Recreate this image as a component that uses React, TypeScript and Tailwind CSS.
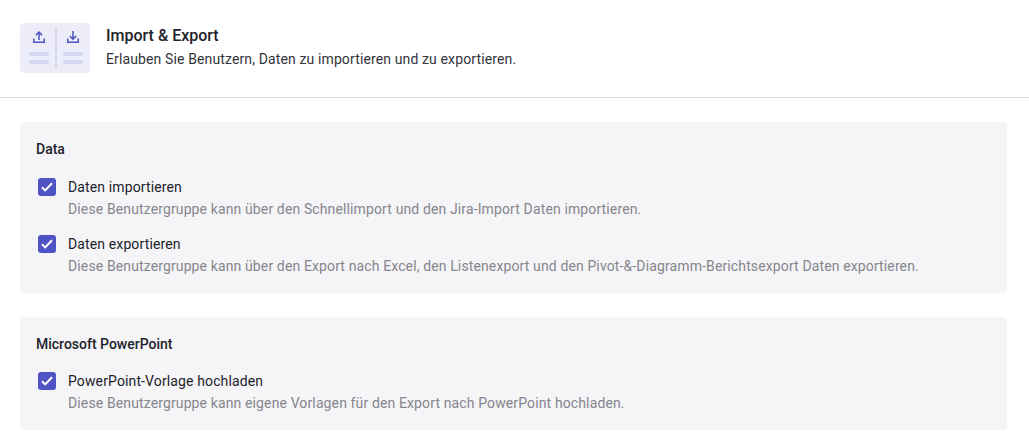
const font = "font-['Roboto',sans-serif]";

const CheckRow = ({ label, hint }: { label: string; hint: string }) => (
  <div className="flex items-start">
    <div className="mt-[9px] mr-[12px] ml-[2px] flex h-[18px] w-[18px] items-center justify-center rounded-[3px] bg-[#5053c4]">
      <svg width="12" height="10" viewBox="0 0 12 10" fill="none">
        <path d="M1 5.2 4.2 8.4 11 1.2" stroke="#fff" strokeWidth="2" />
      </svg>
    </div>
    <div className="pt-[8px] tracking-[0.125px]">
      <div className="text-[14px] leading-[20px] text-[#22222a]">{label}</div>
      <div className="mt-[2px] text-[14px] leading-[20px] text-[#85858c]">{hint}</div>
    </div>
  </div>
);

const Card = ({ title, children }: { title: string; children: React.ReactNode }) => (
  <section className="rounded-[4px] bg-[#f5f5f8] px-[16px] pt-[19px] pb-[17px]">
    <h3 className="mb-[10.5px] text-[14px] leading-[17px] font-medium text-[#22222a]">{title}</h3>
    <div className="flex flex-col gap-[7px]">{children}</div>
  </section>
);

const IconColumn = ({ arrow }: { arrow: string }) => (
  <div className="flex w-[30px] flex-col items-center pt-[4px]">
    <svg width="12" height="12" viewBox="0 0 12 12" fill="none" stroke="#5053c4" strokeWidth="1.5">
      <path d={arrow} />
      <path d="M.75 7.5v3.75h10.5V7.5" />
    </svg>
    <div className="mt-[9px] h-[4px] w-[20px] rounded-full bg-[#d5d6ef]" />
    <div className="mt-[4px] h-[4px] w-[20px] rounded-full bg-[#d5d6ef]" />
  </div>
);

const HeaderIcon = () => (
  <div className="flex h-[50px] w-[70px] rounded-[4px] bg-[#ecedf8] py-[4px] pr-[2px] pl-[4px]">
    <IconColumn arrow="M6 9V1.2M2.8 4.2 6 1l3.2 3.2" />
    <div className="mx-[1px] w-[2px] bg-[#d5d6ef]" />
    <IconColumn arrow="M6 0v8M2.8 5 6 8.2 9.2 5" />
  </div>
);

export default function App() {
  return (
    <div className={`${font} h-[448px] w-[1029px] overflow-hidden bg-white`}>
      <header className="flex h-[98px] items-start border-b border-[#dedee2] px-[20px] pt-[23px]">
        <HeaderIcon />
        <div className="ml-[16px]">
          <h2 className="mt-[1px] text-[16px] leading-[24px] font-medium text-[#22222a]">Import &amp; Export</h2>
          <p className="mt-[1px] text-[14px] leading-[20px] tracking-[0.125px] text-[#33333b]">
            Erlauben Sie Benutzern, Daten zu importieren und zu exportieren.
          </p>
        </div>
      </header>
      <main className="flex flex-col gap-[24px] pt-[24px] pr-[22px] pl-[20px]">
        <Card title="Data">
          <CheckRow
            label="Daten importieren"
            hint="Diese Benutzergruppe kann über den Schnellimport und den Jira-Import Daten importieren."
          />
          <CheckRow
            label="Daten exportieren"
            hint="Diese Benutzergruppe kann über den Export nach Excel, den Listenexport und den Pivot-&-Diagramm-Berichtsexport Daten exportieren."
          />
        </Card>
        <Card title="Microsoft PowerPoint">
          <CheckRow
            label="PowerPoint-Vorlage hochladen"
            hint="Diese Benutzergruppe kann eigene Vorlagen für den Export nach PowerPoint hochladen."
          />
        </Card>
      </main>
    </div>
  );
}
